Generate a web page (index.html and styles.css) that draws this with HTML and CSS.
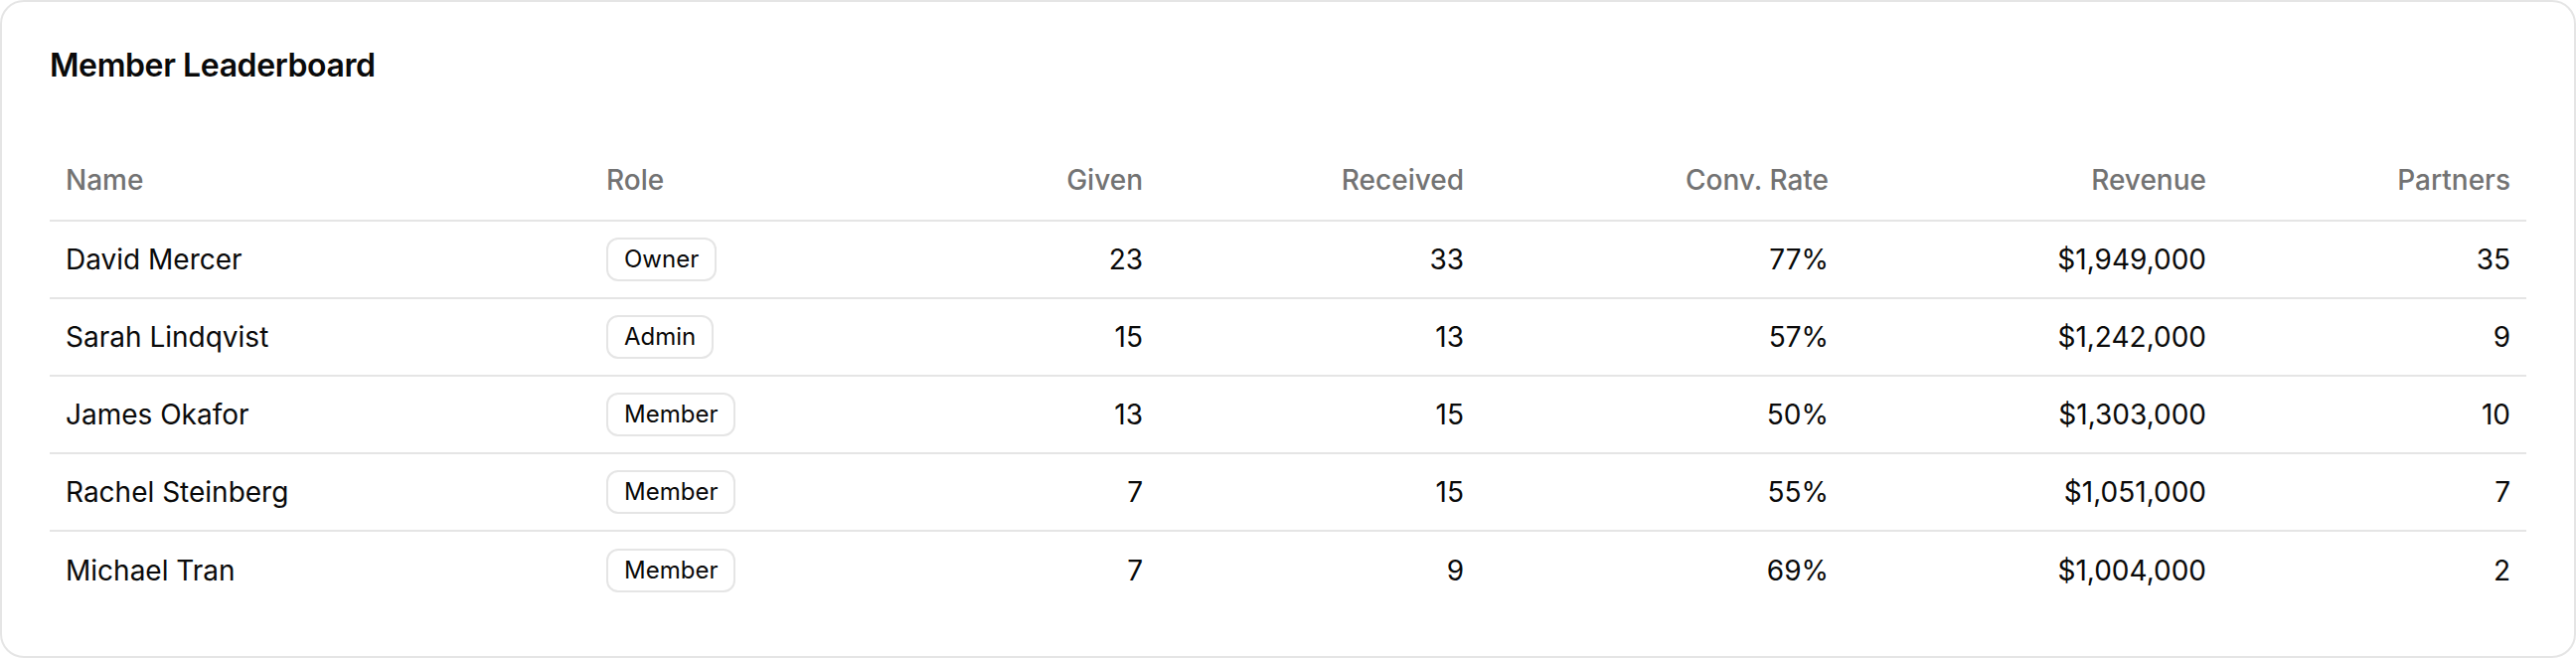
FILE: index.html
```html
<!DOCTYPE html>
<html lang="en">
<head>
<meta charset="utf-8">
<title>Member Leaderboard</title>
<link rel="stylesheet" href="styles.css">
</head>
<body>
<div class="card">
  <div class="card-header">
    <h2 class="card-title">Member Leaderboard</h2>
  </div>
  <div class="card-content">
    <table class="table">
      <colgroup>
        <col class="c-name"><col class="c-role"><col class="c-given"><col class="c-received"><col class="c-conv"><col class="c-revenue"><col class="c-partners">
      </colgroup>
      <thead>
        <tr>
          <th>Name</th>
          <th>Role</th>
          <th class="num">Given</th>
          <th class="num">Received</th>
          <th class="num">Conv. Rate</th>
          <th class="num">Revenue</th>
          <th class="num">Partners</th>
        </tr>
      </thead>
      <tbody>
        <tr>
          <td>David Mercer</td>
          <td><span class="badge">Owner</span></td>
          <td class="num">23</td>
          <td class="num">33</td>
          <td class="num">77%</td>
          <td class="num">$1,949,000</td>
          <td class="num">35</td>
        </tr>
        <tr>
          <td>Sarah Lindqvist</td>
          <td><span class="badge">Admin</span></td>
          <td class="num">15</td>
          <td class="num">13</td>
          <td class="num">57%</td>
          <td class="num">$1,242,000</td>
          <td class="num">9</td>
        </tr>
        <tr>
          <td>James Okafor</td>
          <td><span class="badge">Member</span></td>
          <td class="num">13</td>
          <td class="num">15</td>
          <td class="num">50%</td>
          <td class="num">$1,303,000</td>
          <td class="num">10</td>
        </tr>
        <tr>
          <td>Rachel Steinberg</td>
          <td><span class="badge">Member</span></td>
          <td class="num">7</td>
          <td class="num">15</td>
          <td class="num">55%</td>
          <td class="num">$1,051,000</td>
          <td class="num">7</td>
        </tr>
        <tr>
          <td>Michael Tran</td>
          <td><span class="badge">Member</span></td>
          <td class="num">7</td>
          <td class="num">9</td>
          <td class="num">69%</td>
          <td class="num">$1,004,000</td>
          <td class="num">2</td>
        </tr>
      </tbody>
    </table>
  </div>
</div>
</body>
</html>
```
FILE: styles.css
```css
html, body {
  margin: 0;
  padding: 0;
  background: #ffffff;
}
body {
  font-family: Inter, "Noto Sans", "Liberation Sans", sans-serif;
  color: #0a0a0a;
}
.card {
  box-sizing: border-box;
  width: 2592px;
  height: 662px;
  overflow: hidden;
  border: 2px solid #e5e5e5;
  border-radius: 24px;
  padding: 48px 48px;
  background: #ffffff;
  display: flex;
  flex-direction: column;
  gap: 59px;
}
.card-title {
  margin: 0;
  font-size: 32px;
  line-height: 32px;
  font-weight: 600;
  letter-spacing: -0.4px;
}
.table {
  width: 100%;
  border-collapse: collapse;
  table-layout: fixed;
  font-size: 28px;
  line-height: 40px;
}
.c-name { width: 544px; }
.c-role { width: 286px; }
.c-given { width: 286px; }
.c-received { width: 323px; }
.c-conv { width: 367px; }
.c-revenue { width: 380px; }
.c-partners { width: 306px; }
.table th {
  height: 80px;
  padding: 0 16px;
  text-align: left;
  vertical-align: middle;
  font-weight: 500;
  color: #737373;
}
.table thead tr {
  border-bottom: 2px solid #e5e5e5;
}
.table tbody tr {
  border-bottom: 2px solid #e5e5e5;
}
.table tbody tr:last-child {
  border-bottom: 0;
}
.table td {
  box-sizing: border-box;
  height: 78px;
  padding: 0 16px;
  vertical-align: middle;
  white-space: nowrap;
}
.table .num {
  text-align: right;
}
.badge {
  display: inline-flex;
  align-items: center;
  box-sizing: border-box;
  height: 44px;
  padding: 4px 16px;
  border: 2px solid #e5e5e5;
  border-radius: 12px;
  font-size: 24px;
  line-height: 32px;
  font-weight: 400;
  color: #0a0a0a;
  vertical-align: top;
}
```
